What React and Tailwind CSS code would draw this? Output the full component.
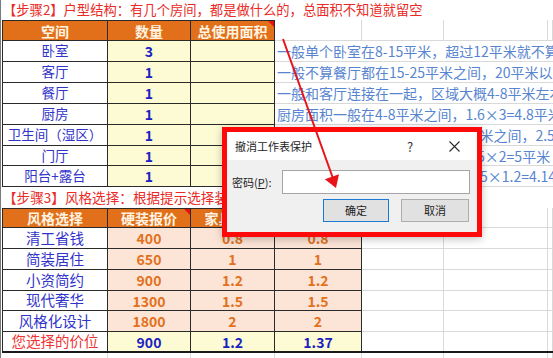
import React from "react";

const ROW = "grid grid-cols-[106px_83px_84px_87px_82px_104px_1fr]";
const CELL = "flex items-center justify-center overflow-hidden whitespace-nowrap leading-none";
const BK = "border-r border-b border-[#2a2a2a]";
const GR = "border-r border-b border-[#d9d9d9]";

function Cell({ className = "", children }) {
  return <div className={CELL + " " + className}>{children}</div>;
}

function Corner() {
  return (
    <div className="absolute top-0 right-0 w-0 h-0 border-t-[6px] border-l-[6px] border-t-[#e81010] border-l-transparent" />
  );
}

const rows1 = [
  ["卧室", "3", "一般单个卧室在8-15平米，超过12平米就不算小了", "h-[21px]"],
  ["客厅", "1", "一般不算餐厅都在15-25平米之间，20平米以上就很大了", "h-[21px]"],
  ["餐厅", "1", "一般和客厅连接在一起，区域大概4-8平米左右", "h-[21px]"],
  ["厨房", "1", "厨房面积一般在4-8平米之间，1.6×3=4.8平米", "h-[21px]"],
  ["卫生间（湿区）", "1", "卫生间（湿区）面积一般在3-6平米之间，2.5×2=5平米", "h-[21px]"],
  ["门厅", "1", "门厅面积一般在3-5平米，大约2.5×2=5平米", "h-[20px]"],
  ["阳台+露台", "1", "阳台+露台一般在4平米，长宽3.45×1.2=4.14平米", "h-[21px]"],
];

const rows2 = [
  ["清工省钱", "400", "0.8", "0.8", "h-[21px]"],
  ["简装居住", "650", "1", "1", "h-[21px]"],
  ["小资简约", "900", "1.2", "1.2", "h-[21px]"],
  ["现代奢华", "1300", "1.5", "1.5", "h-[20px]"],
  ["风格化设计", "1800", "2", "2", "h-[21px]"],
];

export default function App() {
  return (
    <div className="relative w-[553px] h-[358px] overflow-hidden bg-white border-l border-[#7a7a7a] pl-px font-['Noto_Sans_CJK_SC','Liberation_Sans',sans-serif]">
      {/* title step 2 */}
      <div className="h-[20px] flex items-center pl-[1px] text-[13.3px] leading-none text-[#ea2a26] whitespace-nowrap">
        【步骤2】户型结构：有几个房间，都是做什么的，总面积不知道就留空
      </div>
      {/* header 1 */}
      <div className={ROW + " h-[21px]"}>
        <Cell className={"border-l border-t bg-[#e2701a] text-[#fff4e2] font-bold text-[14px] " + BK}>空间</Cell>
        <Cell className={"border-t bg-[#e2701a] text-[#fff4e2] font-bold text-[14px] " + BK}>数量</Cell>
        <Cell className={"relative border-t bg-[#e2701a] text-[#fff4e2] font-bold text-[14px] " + BK}>
          总使用面积
          <Corner />
        </Cell>
        <Cell className={GR} />
        <Cell className={GR} />
        <Cell className={GR} />
        <Cell className={GR} />
      </div>
      {rows1.map(([name, n, tip, h]) => (
        <div key={name} className={ROW + " " + h}>
          <Cell className={"border-l bg-white text-[#3134c9] text-[13.5px] " + BK}>{name}</Cell>
          <Cell className={"bg-[#fdfbd3] text-[#1c22c2] font-bold text-[14px] " + BK}>{n}</Cell>
          <Cell className={"bg-[#fdfbd3] " + BK} />
          <div className="col-span-4 flex items-center justify-start overflow-hidden whitespace-nowrap pl-[2px] text-[14px] leading-none text-[#5785d0] border-b border-[#d9d9d9]">
            {tip}
          </div>
        </div>
      ))}
      {/* title step 3 */}
      <div className="h-[21px] flex items-center pl-[1px] text-[13.6px] leading-none text-[#ea2a26] whitespace-nowrap">
        【步骤3】风格选择：根据提示选择装修风格
      </div>
      {/* header 2 */}
      <div className={ROW + " h-[20px]"}>
        <Cell className={"border-l border-t bg-[#e2701a] text-[#fff4e2] font-bold text-[14px] " + BK}>风格选择</Cell>
        <Cell className={"relative border-t bg-[#e2701a] text-[#fff4e2] font-bold text-[14px] " + BK}>
          硬装报价
          <Corner />
        </Cell>
        <Cell className={"border-t bg-[#e2701a] text-[#fff4e2] font-bold text-[14px] " + BK}>家具系数</Cell>
        <Cell className={"border-t bg-[#e2701a] text-[#fff4e2] font-bold text-[14px] " + BK}>总系数</Cell>
        <Cell className={GR} />
        <Cell className={GR} />
        <Cell className={GR} />
      </div>
      {rows2.map(([name, p, a, b, h]) => (
        <div key={name} className={ROW + " " + h}>
          <Cell className={"border-l bg-white text-[#3134c9] text-[14.5px] " + BK}>{name}</Cell>
          <Cell className={"bg-[#fce5d7] text-[#e2711d] font-bold text-[14px] " + BK}>{p}</Cell>
          <Cell className={"bg-[#fce5d7] text-[#e2711d] font-bold text-[14px] " + BK}>{a}</Cell>
          <Cell className={"bg-[#fce5d7] text-[#e2711d] font-bold text-[14px] " + BK}>{b}</Cell>
          <Cell className={GR} />
          <Cell className={GR} />
          <Cell className={GR} />
        </div>
      ))}
      {/* selected row */}
      <div className={ROW + " h-[21px] border-b-2 border-[#1a1a1a]"}>
        <Cell className="border-l border-r border-[#2a2a2a] bg-white text-[#f03434] text-[14.5px]">您选择的价位</Cell>
        <Cell className="border-r border-[#2a2a2a] bg-[#fdfbd3] text-[#1c22c2] font-bold text-[14px]">900</Cell>
        <Cell className="border-r border-[#2a2a2a] bg-[#fdfbd3] text-[#1c22c2] font-bold text-[14px]">1.2</Cell>
        <Cell className="border-r border-[#2a2a2a] bg-[#fdfbd3] text-[#1c22c2] font-bold text-[14px]">1.37</Cell>
        <Cell className="border-r border-[#d9d9d9]" />
        <Cell className="border-r border-[#d9d9d9]" />
        <Cell className="border-r border-[#d9d9d9]" />
      </div>
      <div className={ROW + " h-[10px]"}>
        <Cell className={GR} />
        <Cell className={GR} />
        <Cell className={GR} />
        <Cell className={GR} />
        <Cell className={GR} />
        <Cell className={GR} />
        <Cell className={GR} />
      </div>

      {/* dialog */}
      <div className="absolute left-[221px] top-[127px] w-[260px] h-[110px] border-[5px] border-[#ff0a0a] bg-[#f0f0f0] flex flex-col shadow-[0_2px_8px_rgba(0,0,0,0.25)] text-[11px] text-[#1e1e1e]">
        <div className="h-[28px] bg-white flex items-center pl-[8px] leading-none">
          <span className="flex-1">撤消工作表保护</span>
          <span className="w-[12px] text-[13px] text-[#333] mr-[30px]">?</span>
          <svg width="11" height="11" viewBox="0 0 11 11" className="mr-[17px]">
            <path d="M0.5 0.5 L10.5 10.5 M10.5 0.5 L0.5 10.5" stroke="#2a2a2a" strokeWidth="1.1" fill="none" />
          </svg>
        </div>
        <div className="flex-1 pt-[10px] pl-[5px] pr-[7px]">
          <div className="flex items-center">
            <span className="w-[50px] leading-none">
              密码(<span className="underline">P</span>):
            </span>
            <div className="w-[188px] h-[24px] bg-white border border-[#a5a5a5]" />
          </div>
          <div className="mt-[5px] flex justify-end gap-[12px] pr-[1px]">
            <div className="w-[66px] h-[23px] bg-[#e1e1e1] border border-[#1a7ad6] flex items-center justify-center leading-none">确定</div>
            <div className="w-[68px] h-[23px] bg-[#e1e1e1] border border-[#adadad] flex items-center justify-center leading-none">取消</div>
          </div>
        </div>
      </div>

      {/* arrow */}
      <svg className="absolute left-0 top-0 pointer-events-none" width="553" height="358" viewBox="0 0 553 358">
        <line x1="282" y1="39" x2="331.5" y2="177" stroke="#e8141a" strokeWidth="2" />
        <polygon points="335,188 338,174.2 323.8,179.2" fill="#e8141a" />
      </svg>
    </div>
  );
}
